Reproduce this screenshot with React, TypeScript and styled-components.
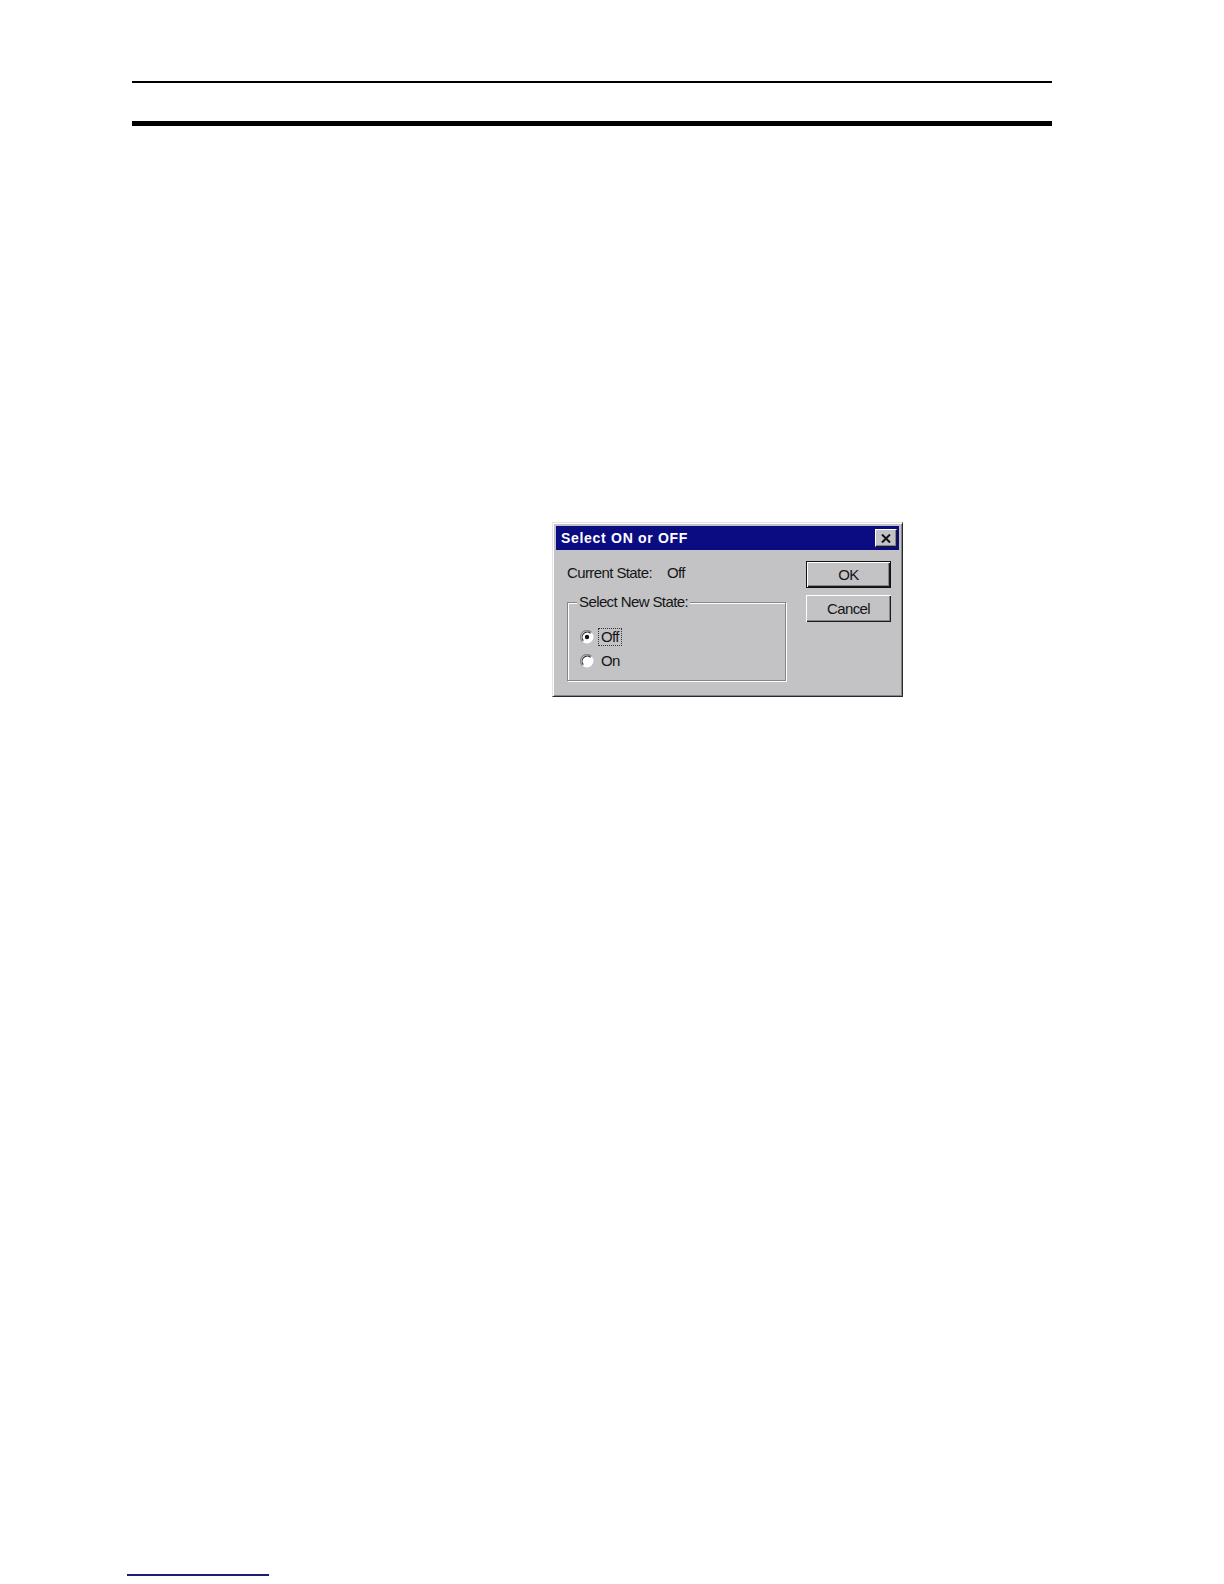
import React from 'react'
import styled, { createGlobalStyle } from 'styled-components'

const GlobalStyle = createGlobalStyle`
	html, body {
		margin: 0;
		padding: 0;
		background: #ffffff;
	}
`

const Page = styled.div`
	width: 1224px;
	height: 1584px;
	box-sizing: border-box;
	padding-top: 81px;
	background: #ffffff;
	overflow: hidden;
	display: flex;
	flex-direction: column;
`
const Header = styled.div`
	margin-left: 132px;
	width: 920px;
	display: flex;
	flex-direction: column;
	gap: 38px;
`
const Rule = styled.div<{ thickness: number }>`
	height: ${(props) => props.thickness}px;
	background: #000000;
`
const Dialog = styled.div`
	margin-top: 396px;
	margin-left: 552px;
	width: 351px;
	height: 175px;
	box-sizing: border-box;
	padding: 2px;
	background: #c3c3c6;
	border-top: 1px solid #e4e4e6;
	border-left: 1px solid #e4e4e6;
	border-right: 1px solid #2a2a2a;
	border-bottom: 1px solid #2a2a2a;
	box-shadow: inset 1px 1px 0 #ffffff, inset -1px -1px 0 #85858a;
	display: flex;
	flex-direction: column;
	font-family: 'Liberation Sans', Arial, sans-serif;
	font-size: 15px;
	letter-spacing: -0.6px;
	color: #151515;
`
const TitleBar = styled.div`
	height: 24px;
	margin: 1px;
	padding: 0 2px 0 5px;
	background: #0b0b82;
	display: flex;
	align-items: center;
	justify-content: space-between;
`
const Title = styled.span`
	color: #ffffff;
	font-weight: bold;
	font-size: 14px;
	letter-spacing: 0.7px;
`
const CloseButton = styled.div`
	width: 22px;
	height: 18px;
	box-sizing: border-box;
	background: #c3c3c6;
	border-top: 1px solid #ffffff;
	border-left: 1px solid #ffffff;
	border-right: 1px solid #1a1a1a;
	border-bottom: 1px solid #1a1a1a;
	box-shadow: inset -1px -1px 0 #85858a;
	display: flex;
	align-items: center;
	justify-content: center;
`
const Body = styled.div`
	flex: 1;
	display: flex;
	padding: 10px 9px 0 12px;
	gap: 17px;
`
const LeftColumn = styled.div`
	flex: 1;
	display: flex;
	flex-direction: column;
	padding-top: 2px;
`
const StateRow = styled.div`
	height: 18px;
	display: flex;
	align-items: center;
`
const StateLabel = styled.span`
	width: 100px;
`
const GroupBox = styled.div`
	position: relative;
	margin-top: 21px;
	width: 219px;
	height: 79px;
	box-sizing: border-box;
	border: 1px solid #85858a;
	box-shadow: 1px 1px 0 #ffffff, inset 1px 1px 0 #ffffff;
	padding: 22px 0 0 12px;
	display: flex;
	flex-direction: column;
`
const GroupLabel = styled.span`
	position: absolute;
	top: -10px;
	left: 9px;
	padding: 0 2px;
	background: #c3c3c6;
	line-height: 18px;
`
const RadioRow = styled.div`
	height: 24px;
	display: flex;
	align-items: center;
	gap: 5px;
`
const RadioLabel = styled.span<{ focused?: boolean }>`
	padding: 0 2px;
	line-height: 16px;
	outline: ${(props) => (props.focused ? '1px dotted #333' : 'none')};
`
const ButtonColumn = styled.div`
	width: 85px;
	display: flex;
	flex-direction: column;
	gap: 7px;
`
const Button = styled.div<{ isDefault?: boolean }>`
	height: 27px;
	box-sizing: border-box;
	background: #c3c3c6;
	display: flex;
	align-items: center;
	justify-content: center;
	border: ${(props) => (props.isDefault ? '1px solid #111111' : 'none')};
	box-shadow: inset 1px 1px 0 #ffffff, inset -1px -1px 0 #1a1a1a,
		inset -2px -2px 0 #85858a;
`
const FooterRule = styled.div`
	margin-top: 877px;
	margin-left: 127px;
	width: 142px;
	height: 2px;
	background: #1c1c80;
`

const Radio = ({ checked }: { checked: boolean }) => (
	<svg width="14" height="14" viewBox="0 0 14 14">
		<circle cx="7" cy="7" r="6.5" fill="#ffffff" />
		<path d="M2.4 11.6 A6.5 6.5 0 0 1 11.6 2.4" fill="none" stroke="#85858a" strokeWidth="1.3" />
		<path d="M3.4 10.6 A5.1 5.1 0 0 1 10.6 3.4" fill="none" stroke="#2a2a2a" strokeWidth="1.1" />
		{checked && <circle cx="7" cy="7" r="2.2" fill="#111111" />}
	</svg>
)

const CloseIcon = () => (
	<svg width="10" height="9" viewBox="0 0 10 9">
		<path d="M1 0.5 L9 8.5 M9 0.5 L1 8.5" stroke="#111111" strokeWidth="2" />
	</svg>
)

const App = () => (
	<>
		<GlobalStyle />
		<Page>
			<Header>
				<Rule thickness={2} />
				<Rule thickness={5} />
			</Header>
			<Dialog>
				<TitleBar>
					<Title>Select ON or OFF</Title>
					<CloseButton>
						<CloseIcon />
					</CloseButton>
				</TitleBar>
				<Body>
					<LeftColumn>
						<StateRow>
							<StateLabel>Current State:</StateLabel>
							<span>Off</span>
						</StateRow>
						<GroupBox>
							<GroupLabel>Select New State:</GroupLabel>
							<RadioRow>
								<Radio checked />
								<RadioLabel focused>Off</RadioLabel>
							</RadioRow>
							<RadioRow>
								<Radio checked={false} />
								<RadioLabel>On</RadioLabel>
							</RadioRow>
						</GroupBox>
					</LeftColumn>
					<ButtonColumn>
						<Button isDefault>OK</Button>
						<Button>Cancel</Button>
					</ButtonColumn>
				</Body>
			</Dialog>
			<FooterRule />
		</Page>
	</>
)

export default App
